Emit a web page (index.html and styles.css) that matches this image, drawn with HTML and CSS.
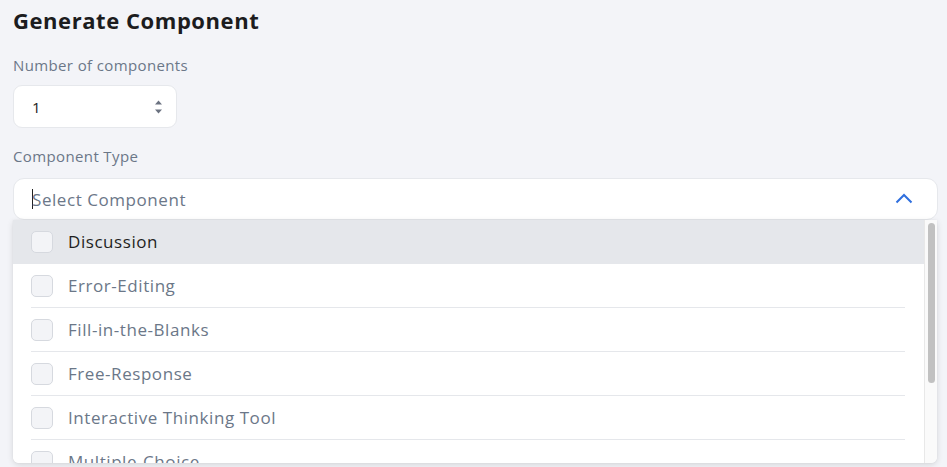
FILE: index.html
```html
<!DOCTYPE html>
<html>
<head>
<meta charset="utf-8">
<link rel="stylesheet" href="styles.css">
</head>
<body>
<div class="page">
  <h1 class="title">Generate Component</h1>
  <div class="field">
    <label class="label">Number of components</label>
    <div class="number-input">
      <span class="num-value">1</span>
      <span class="spinner">
        <svg width="9" height="16" viewBox="0 0 9 16"><path d="M1 5.5 L4.5 1.5 L8 5.5 Z" fill="#6b7280"/><path d="M1 10.5 L4.5 14.5 L8 10.5 Z" fill="#6b7280"/></svg>
      </span>
    </div>
  </div>
  <div class="field select-field">
    <label class="label">Component Type</label>
    <div class="select-wrap">
      <div class="select">
        <span class="caret"></span><span class="placeholder">Select Component</span>
        <svg class="chevron" width="18" height="11" viewBox="0 0 18 11"><path d="M1.5 9.5 L9 2 L16.5 9.5" fill="none" stroke="#2f6fde" stroke-width="2"/></svg>
      </div>
      <div class="dropdown">
        <div class="list">
          <div class="item active"><div class="item-inner"><span class="box"></span><span class="item-text">Discussion</span></div></div>
          <div class="item"><div class="item-inner"><span class="box"></span><span class="item-text">Error-Editing</span></div></div>
          <div class="item"><div class="item-inner"><span class="box"></span><span class="item-text">Fill-in-the-Blanks</span></div></div>
          <div class="item"><div class="item-inner"><span class="box"></span><span class="item-text">Free-Response</span></div></div>
          <div class="item"><div class="item-inner"><span class="box"></span><span class="item-text">Interactive Thinking Tool</span></div></div>
          <div class="item"><div class="item-inner"><span class="box"></span><span class="item-text">Multiple-Choice</span></div></div>
        </div>
        <div class="scrolltrack"><div class="thumb"></div></div>
      </div>
    </div>
  </div>
  <div class="field">
    <label class="label">Content Manual Tasks</label>
  </div>
</div>
</body>
</html>
```
FILE: styles.css
```css
* { box-sizing: border-box; }
html, body { margin: 0; padding: 0; }
body {
  background: #f3f4f8;
  font-family: "Open Sans", "Noto Sans", sans-serif;
  letter-spacing: 0.035em;
  width: 947px;
  height: 467px;
  overflow: hidden;
}
.page {
  padding: 4px 9px 0 13px;
}
.title {
  margin: 0;
  font-size: 22px;
  font-weight: 700;
  line-height: 32px;
  color: #1c1c1e;
}
.field {
  display: flex;
  flex-direction: column;
}
.label {
  margin-top: 19px;
  font-size: 15px;
  line-height: 20px;
  color: #6b7788;
  letter-spacing: 0.025em;
}
.number-input {
  margin-top: 10px;
  width: 164px;
  height: 43px;
  background: #fff;
  border: 1px solid #e6e8ec;
  border-radius: 9px;
  display: flex;
  align-items: center;
  justify-content: space-between;
  padding: 0 13px 0 18px;
}
.num-value {
  font-size: 15px;
  color: #222;
}
.spinner { display: flex; }
.select-field .label { margin-top: 18px; }
.select-wrap {
  position: relative;
  margin-top: 12px;
  margin-bottom: 228px;
}
.select {
  height: 42px;
  background: #fff;
  border: 1px solid #e6e8ec;
  border-radius: 11px;
  display: flex;
  align-items: center;
  padding: 0 24px 0 18px;
}
.caret {
  width: 1px;
  height: 20px;
  background: #222;
  margin-right: -1px;
}
.placeholder {
  flex: 1;
  font-size: 17px;
  color: #6b7788;
}
.chevron { margin-top: -1px; }
.dropdown {
  position: absolute;
  left: 0;
  top: 42px;
  width: 924px;
  height: 243px;
  background: #fff;
  border-radius: 0 0 6px 6px;
  box-shadow: 0 2px 6px rgba(0,0,0,0.12), 0 0 2px rgba(0,0,0,0.06);
  display: flex;
  overflow: hidden;
  z-index: 2;
}
.list {
  flex: 1;
  overflow: hidden;
}
.item {
  height: 44px;
  background: #fff;
}
.item.active { background: #e5e7eb; }
.item-inner {
  height: 44px;
  margin: 0 19px 0 18px;
  display: flex;
  align-items: center;
  border-bottom: 1px solid #e5e7eb;
}
.item.active .item-inner { border-bottom-color: transparent; }
.box {
  width: 22px;
  height: 22px;
  border: 1px solid #d6d9df;
  background: #f3f4f7;
  border-radius: 5px;
  margin-right: 15px;
  flex: none;
}
.item-text {
  font-size: 17px;
  color: #6b7788;
}
.item.active .item-text { color: #1f1f22; }
.scrolltrack {
  width: 13px;
  background: #fafafa;
  border-left: 1px solid #e8e8e8;
  padding: 3px 2px 0 3px;
}
.thumb {
  width: 7px;
  height: 160px;
  background: #c1c1c1;
  border-radius: 4px;
}
```
